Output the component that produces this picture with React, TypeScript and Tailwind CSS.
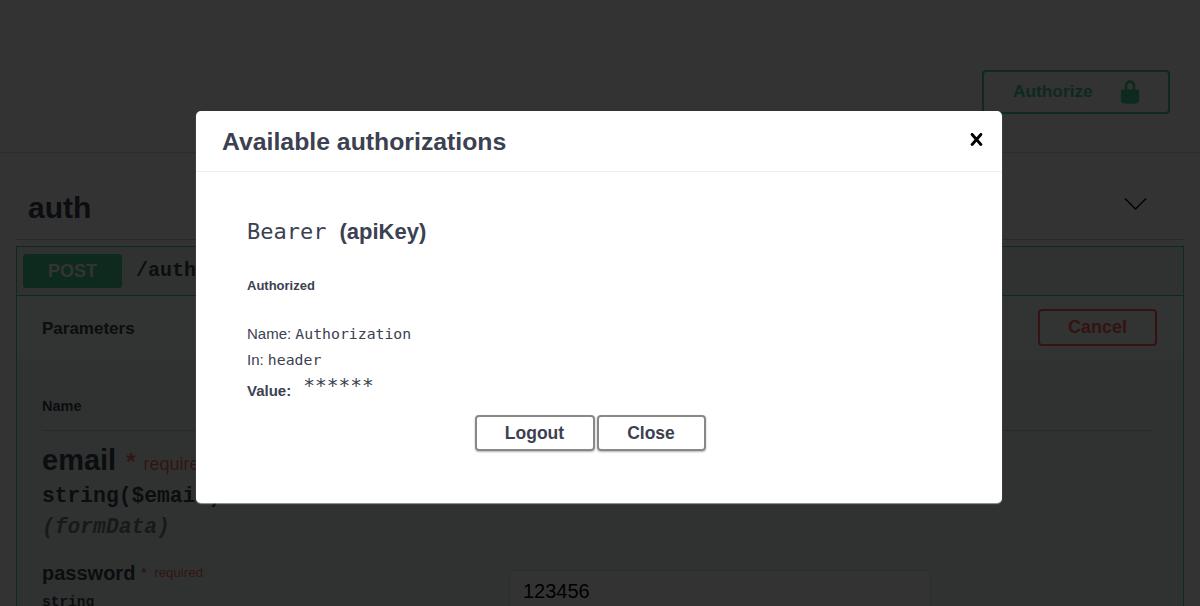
import React from 'react';

const sans = "font-['Liberation_Sans',Arial,sans-serif]";
const mono = "font-['Liberation_Mono','Courier_New',monospace]";
const thin = "font-['DejaVu_Sans_Mono',monospace]";

function Backdrop() {
  return (
    <div className={`h-[606px] overflow-hidden bg-white text-[#3b4151] ${sans}`}>
      <div className="flex h-[153px] items-start justify-end border-b border-[#d9d9d9] pr-[30px] pt-[70px]">
        <button className="flex h-[44px] w-[188px] items-center rounded-[4px] border-2 border-[#49cc90] pl-[29px] text-[17.3px] font-bold text-[#49cc90]">
          Authorize
          <svg className="ml-[24px] fill-[#49cc90]" width="26" height="26" viewBox="0 0 20 20">
            <path d="M15.8 8H14V5.6C14 2.703 12.665 1 10 1 7.334 1 6 2.703 6 5.6V8H4c-.553 0-1 .646-1 1.199V17c0 .549.428 1.139.951 1.307l1.197.387C5.672 18.861 6.55 19 7.1 19h5.8c.549 0 1.428-.139 1.951-.307l1.196-.387c.524-.167.953-.757.953-1.306V9.199C17 8.646 16.352 8 15.8 8zM12 8H8V5.199C8 3.754 8.797 3 10 3c1.203 0 2 .754 2 2.199V8z" />
          </svg>
        </button>
      </div>

      <div className="px-[16px]">
        <div className="flex h-[87px] items-end justify-between border-b border-[#d0d3d8] pb-[11px] pl-[12px] pr-[37px]">
          <h2 className="text-[30px] font-bold leading-[40px]">auth</h2>
          <svg className="mb-[17px]" width="23" height="14" viewBox="0 0 23 14" fill="none" stroke="#000" strokeWidth="1.3">
            <path d="M1 1.5 11.5 12 22 1.5" />
          </svg>
        </div>

        <div className="mt-[6px] border border-[#49cc90] bg-[#49cc90]/10">
          <div className="flex h-[49px] items-center border-b border-[#49cc90] pl-[6px]">
            <span className="flex h-[34px] w-[99px] items-center justify-center rounded-[3px] bg-[#49cc90] text-[18px] font-bold text-white">POST</span>
            <span className={`ml-[14px] text-[20px] font-bold ${mono}`}>/auth/login</span>
          </div>

          <div className="flex h-[63px] items-start justify-between bg-white/80 pl-[25px] pr-[26px] pt-[13px]">
            <span className="pt-[7px] text-[17px] font-bold">Parameters</span>
            <button className="h-[37px] w-[119px] rounded-[4px] border-2 border-[#ff6060] text-[18px] font-bold text-[#ff6060]">Cancel</button>
          </div>

          <div className="pl-[25px] pr-[30px]">
            <div className="flex h-[72px] items-end border-b border-[#c5cad0] pb-[12px] text-[14.5px] font-bold">Name</div>
            <div className="grid grid-cols-[467px_1fr] pt-[10px]">
              <div>
                <div className="flex items-baseline">
                  <span className="text-[29px] font-bold leading-[38px]">email</span>
                  <span className="ml-[10px] text-[18px] text-[#ff0000]/60">
                    <span className="mr-[3px] text-[24px] font-bold leading-[20px]">*</span> required
                  </span>
                </div>
                <div className={`mt-[2px] text-[21.3px] font-bold leading-[30px] ${mono}`}>string($email)</div>
                <div className={`text-[21.3px] font-bold italic leading-[32px] text-[#7b7f88] ${mono}`}>(formData)</div>
              </div>
            </div>
            <div className="grid grid-cols-[467px_422px] pt-[15px]">
              <div>
                <div className="flex items-baseline">
                  <span className="text-[20px] font-bold leading-[30px]">password</span>
                  <span className="ml-[6px] -translate-y-[3px] text-[13.3px] text-[#ff0000]/60">
                    <span className="mr-[4px] font-bold">*</span> required
                  </span>
                </div>
                <div className={`mt-[5px] text-[14.5px] font-bold leading-[18px] ${mono}`}>string</div>
              </div>
              <div className="mt-[12px] h-[60px] rounded-[4px] border border-[#d9d9d9] bg-white px-[13px] pt-[5px] text-[20px] leading-[30px] text-black">123456</div>
            </div>
          </div>
        </div>
      </div>
    </div>
  );
}

function AuthModal() {
  return (
    <div className={`absolute inset-0 bg-black/80 pl-[196px] pt-[111px] text-[#3b4151] ${sans}`}>
      <div className="h-[392px] w-[806px] rounded-[5px] bg-white shadow-[0_1px_1px_rgba(255,255,255,0.5)]">
        <div className="flex h-[61px] items-center justify-between border-b border-[#eeeeee] pl-[26px] pr-[13px]">
          <h3 className="pt-[1px] text-[24.8px] font-bold leading-[60px]">Available authorizations</h3>
          <svg width="25" height="25" viewBox="0 0 20 20" className="-mt-[4px] fill-black">
            <path d="M14.348 14.849c-.469.469-1.229.469-1.697 0L10 11.819l-2.651 3.029c-.469.469-1.229.469-1.697 0-.469-.469-.469-1.229 0-1.697l2.758-3.15-2.759-3.152c-.469-.469-.469-1.228 0-1.697s1.228-.469 1.697 0L10 8.183l2.651-3.031c.469-.469 1.228-.469 1.697 0s.469 1.229 0 1.697l-2.758 3.152 2.758 3.15c.469.469.469 1.229 0 1.698z" />
          </svg>
        </div>

        <div className="pl-[51px] pr-[26px] pt-[45px]">
          <h4 className="flex items-baseline text-[22px] leading-[30px]">
            <span className={thin}>Bearer</span>
            <span className="ml-[13px] font-bold">(apiKey)</span>
          </h4>
          <h6 className="mt-[31px] text-[13px] font-bold leading-[16px]">Authorized</h6>
          <div className="mt-[27px] text-[15px] leading-[26px]">
            <p>Name: <span className={`text-[14.8px] ${thin}`}>Authorization</span></p>
            <p>In: <span className={`text-[14.8px] ${thin}`}>header</span></p>
            <p className="flex items-start leading-[26px]">
              <span className="mt-[5px] font-bold">Value:</span>
              <span className={`ml-[12px] text-[19.5px] ${thin}`}>******</span>
            </p>
          </div>
          <div className="mt-[11px] flex justify-center gap-[2px] pr-[43px]">
            <button className="h-[36px] w-[120px] rounded-[4px] border-2 border-[#888888] text-[17.5px] font-bold shadow-[0_1px_2px_rgba(0,0,0,0.3)]">Logout</button>
            <button className="h-[36px] w-[109px] rounded-[4px] border-2 border-[#888888] text-[17.5px] font-bold shadow-[0_1px_2px_rgba(0,0,0,0.3)]">Close</button>
          </div>
        </div>
      </div>
    </div>
  );
}

export default function App() {
  return (
    <div className="relative h-[606px] w-[1200px] overflow-hidden">
      <Backdrop />
      <AuthModal />
    </div>
  );
}
